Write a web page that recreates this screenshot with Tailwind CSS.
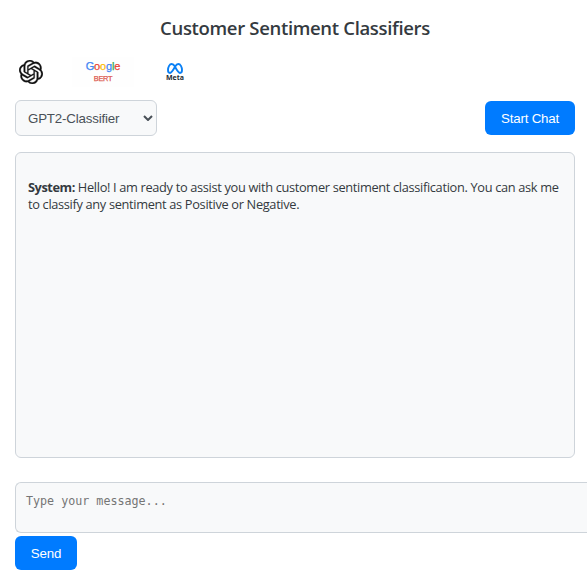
<!DOCTYPE html>
<html lang="en">
<head>
<meta charset="utf-8">
<title>Customer Sentiment Classifiers</title>
<script src="https://cdn.jsdelivr.net/npm/@tailwindcss/browser@4"></script>
</head>
<body class="h-[584px] overflow-hidden bg-white pr-3 pl-[15px] font-['Open_Sans','Noto_Sans',sans-serif] text-[#343a40]">
<h1 class="pt-4 text-center text-[18.5px] leading-6 font-semibold tracking-[-0.33px] whitespace-nowrap">Customer Sentiment Classifiers</h1>

<div class="mt-3 flex h-10 items-center">
  <svg class="ml-1 size-6 shrink-0" viewBox="0 0 24 24" fill="#111" stroke="#111" stroke-width=".3" aria-label="OpenAI"><path d="M22.2819 9.8211a5.9847 5.9847 0 0 0-.5157-4.9108 6.0462 6.0462 0 0 0-6.5098-2.9A6.0651 6.0651 0 0 0 4.9807 4.1818a5.9847 5.9847 0 0 0-3.9977 2.9 6.0462 6.0462 0 0 0 .7427 7.0966 5.98 5.98 0 0 0 .511 4.9107 6.051 6.051 0 0 0 6.5146 2.9001A5.9847 5.9847 0 0 0 13.2599 24a6.0557 6.0557 0 0 0 5.7718-4.2058 5.9894 5.9894 0 0 0 3.9977-2.9001 6.0557 6.0557 0 0 0-.7475-7.0729zm-9.022 12.6081a4.4755 4.4755 0 0 1-2.8764-1.0408l.1419-.0804 4.7783-2.7582a.7948.7948 0 0 0 .3927-.6813v-6.7369l2.02 1.1686a.071.071 0 0 1 .038.052v5.5826a4.504 4.504 0 0 1-4.4945 4.4944zm-9.6607-4.1254a4.4708 4.4708 0 0 1-.5346-3.0137l.142.0852 4.783 2.7582a.7712.7712 0 0 0 .7806 0l5.8428-3.3685v2.3324a.0804.0804 0 0 1-.0332.0615L9.74 19.9502a4.4992 4.4992 0 0 1-6.1408-1.6464zM2.3408 7.8956a4.485 4.485 0 0 1 2.3655-1.9728V11.6a.7664.7664 0 0 0 .3879.6765l5.8144 3.3543-2.0201 1.1685a.0757.0757 0 0 1-.071 0l-4.8303-2.7865A4.504 4.504 0 0 1 2.3408 7.872zm16.5963 3.8558L13.1038 8.364 15.1192 7.2a.0757.0757 0 0 1 .071 0l4.8303 2.7913a4.4944 4.4944 0 0 1-.6765 8.1042v-5.6772a.79.79 0 0 0-.407-.667zm2.0107-3.0231l-.142-.0852-4.7735-2.7818a.7759.7759 0 0 0-.7854 0L9.409 9.2297V6.8974a.0662.0662 0 0 1 .0284-.0615l4.8303-2.7866a4.4992 4.4992 0 0 1 6.6802 4.66zM8.3065 12.863l-2.02-1.1638a.0804.0804 0 0 1-.038-.0567V6.0742a4.4992 4.4992 0 0 1 7.3757-3.4537l-.142.0805L8.704 5.459a.7948.7948 0 0 0-.3927.6813zm1.0976-2.3654l2.602-1.4998 2.6069 1.4998v2.9994l-2.5974 1.4997-2.6067-1.4997Z"/></svg>
  <div class="ml-[29px] flex h-[30px] w-[62px] flex-col items-center bg-[#fefefe] pt-[3px] font-['Liberation_Sans',sans-serif]">
    <div class="text-[11px] leading-[12px] font-medium tracking-[-0.15px] [-webkit-text-stroke:0.25px]"><span class="text-[#4285f4]">G</span><span class="text-[#ea4335]">o</span><span class="text-[#fbbc05]">o</span><span class="text-[#4285f4]">g</span><span class="text-[#34a853]">l</span><span class="text-[#ea4335]">e</span></div>
    <div class="mt-[3px] text-[7.4px] leading-[8px] tracking-[-0.3px] text-[#dc5a50] [-webkit-text-stroke:0.25px]">BERT</div>
  </div>
  <div class="mb-px ml-[31px] flex w-5 flex-col items-center">
    <svg class="h-[11px] w-4" viewBox="0 0 16 11" fill="none" stroke="#0a80f5" stroke-width="1.9" stroke-linecap="round" aria-label="Meta"><path d="M8 3.5C6.9 1.8 5.9 1 4.7 1 2.6 1 1 4 1 7.1 1 9 1.8 10 3 10c1.4 0 2.3-1.2 5-6.2C9.2 1.8 10.1 1 11.3 1 13.4 1 15 4 15 7.1 15 9 14.2 10 13 10c-1.4 0-2.3-1.2-5-6.2"/></svg>
    <div class="text-[7px] leading-[7px] font-bold text-[#1c2b33]">Meta</div>
  </div>
</div>

<div class="mt-2 flex h-9 items-center justify-between font-['Liberation_Sans',sans-serif]">
  <button class="flex h-9 w-[142px] items-center justify-between rounded-md border border-[#ced4da] bg-[#f8f9fa] pr-[3px] pl-3 text-[13.3px] text-[#495057]">
    <span class="pt-px tracking-[-0.17px]">GPT2-Classifier</span>
    <svg class="h-[6px] w-[10px]" viewBox="0 0 10 6" fill="none" stroke="#495057" stroke-width="2"><path d="M1 1l4 4 4-4"/></svg>
  </button>
  <button class="h-[34px] w-[90px] rounded-md bg-[#007bff] pt-px text-[13.3px] tracking-[-0.2px] text-white">Start Chat</button>
</div>

<div class="mt-4 h-[306px] rounded-md border border-[#ced4da] bg-[#f8f9fa] px-3 pt-[26px]">
  <p class="text-[12.8px] leading-[17px] tracking-[-0.33px] whitespace-nowrap"><strong class="tracking-[-0.45px]">System:</strong> Hello! I am ready to assist you with customer sentiment classification. You can ask me<br>to classify any sentiment as Positive or Negative.</p>
</div>

<textarea class="mt-6 block h-[51px] w-[572px] resize-none overflow-hidden rounded-l-md border border-r-0 border-[#ced4da] bg-[#f8f9fa] px-2.5 py-2.5 font-['DejaVu_Sans_Mono',monospace] text-[11.7px] leading-4 placeholder:text-[#757575]" placeholder="Type your message..."></textarea>
<button class="mt-[3px] block h-[34px] w-[62px] rounded-md bg-[#007bff] pt-px font-['Liberation_Sans',sans-serif] text-[13.3px] tracking-[-0.1px] text-white">Send</button>
</body>
</html>
